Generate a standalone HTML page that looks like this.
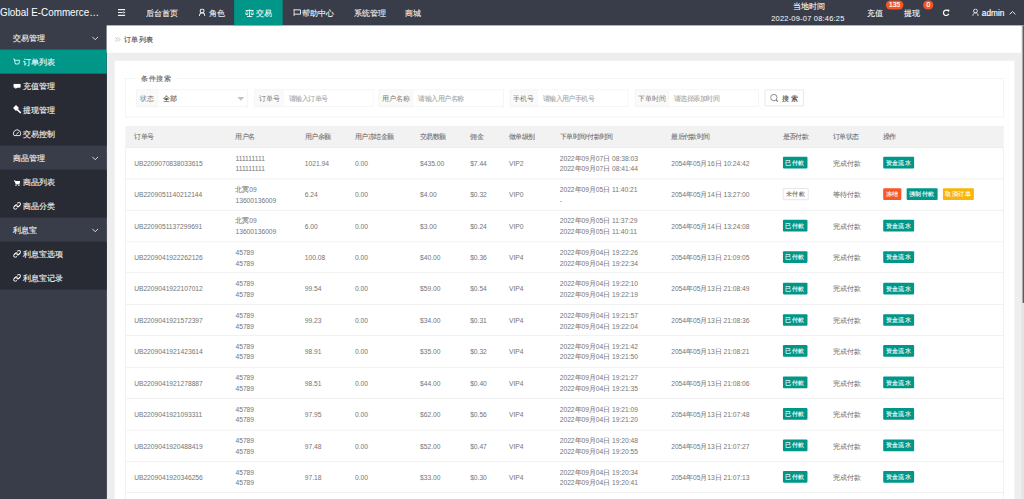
<!DOCTYPE html>
<html><head><meta charset="utf-8">
<style>
*{box-sizing:border-box;margin:0;padding:0}
html,body{width:1024px;height:499px;overflow:hidden;background:#eee}
body{font-family:"Liberation Sans",sans-serif}
#root{position:absolute;left:0;top:0;width:1920px;height:936px;transform:scale(0.533333);transform-origin:0 0;background:#eeeeee;overflow:hidden;font-family:"Liberation Sans",sans-serif}
#inner{position:absolute;left:0;top:0;width:1920px;height:936px}
.abs{position:absolute}
#hdr{left:0;top:0;width:1920px;height:48px;background:#393D49;color:#fff}
#logo{left:0;top:0;width:240px;height:48px;line-height:45.5px;font-size:21px;transform:scaleX(.88);transform-origin:0 0;color:#fff;white-space:nowrap;overflow:hidden}
.nav{position:absolute;top:0;height:48px;line-height:49px;font-size:15px;color:#f0f0f0;-webkit-text-stroke:.2px #f0f0f0;white-space:nowrap}
.nav.act{background:#009688;color:#fff}
.ico{position:absolute}
#side{left:0;top:48px;width:200px;height:888px;background:#393D49}
.si{position:absolute;left:0;width:200px;height:45px;line-height:47px;font-size:15px;color:#f0f0f0;-webkit-text-stroke:.25px #f0f0f0;white-space:nowrap}
.si.child{background:transparent}
.si.act{background:#009688;color:#fff}
#crumb{left:200px;top:48px;width:1715px;height:51px;background:#fff;box-shadow:0 1px 3px rgba(0,0,0,.12)}
#crumbtxt{left:232px;top:48px;height:51px;line-height:51px;font-size:14px;color:#555;-webkit-text-stroke:.3px #555;white-space:nowrap}
#scroll{left:1915px;top:48px;width:5px;height:888px;background:#e4e4e4}
#thumb{left:1916.5px;top:48px;width:3.5px;height:520px;background:linear-gradient(90deg,#8a8a8a,#454545)}
#card{left:215px;top:114px;width:1687px;height:900px;background:#fff}
#fs{left:235px;top:147px;width:1647px;height:73px;border:1px solid #ebebeb}
#legend{left:254px;top:136px;height:22px;line-height:22px;padding:0 11px;background:#fff;font-size:14px;color:#666;-webkit-text-stroke:.2px #666;white-space:nowrap}
.lab{position:absolute;top:168px;height:32px;line-height:33px;border:1px solid #eee;background:#fafafa;color:#777;font-size:12.5px;text-align:center;white-space:nowrap}
.inp{position:absolute;top:168px;height:32px;line-height:33px;border:1px solid #eee;border-left:none;background:#fff;color:#aaa;font-size:12.6px;letter-spacing:-.9px;color:#aaa;-webkit-text-stroke:.2px #aaa;padding-left:9.5px;white-space:nowrap}
#sbtn{left:1434px;top:168px;width:73px;height:31px;border:1px solid #d6d6d6;background:#fff;border-radius:1px;line-height:30px;font-size:13px;color:#555;white-space:nowrap}
#tbl{left:235px;top:236px;width:1647px}
table{border-left:1px solid #e6e6e6;border-right:1px solid #e6e6e6;border-collapse:collapse;table-layout:fixed;width:1647px;font-size:12.6px;color:#666;letter-spacing:-.05px}
.td{position:absolute;line-height:20px;white-space:nowrap;font-size:12.6px;color:#757575;letter-spacing:-.05px}
.c{-webkit-text-stroke:.1px #707070}
.th{position:absolute;line-height:20px;white-space:nowrap;font-size:12.2px;color:#707070;-webkit-text-stroke:.15px #707070}
td{height:58.85px}
th{height:41px}
.btn{display:inline-block;float:left;height:22px;line-height:22px;padding:0 5px;font-size:12px;color:#fff;-webkit-text-stroke:.2px #fff;background:#009688;border-radius:2px;letter-spacing:0;vertical-align:middle;white-space:nowrap}
.btn+.btn{margin-left:10px}
.btn.pri{background:#fff;color:#666;-webkit-text-stroke:.15px #666;border:1px solid #d2d2d2;line-height:20px}
.btn.dan{background:#F85824}
.btn.warm{background:#F9B60A}
.badge{position:absolute;height:17px;line-height:17px;border-radius:9px;background:#F4561F;color:#fff;font-size:12.5px;-webkit-text-stroke:.3px #fff;text-align:center}
</style></head>
<body>
<div id="root"><div id="inner">
<div class="abs" style="left:0;top:0;width:200px;height:936px;background:#393D49"></div>
<div id="hdr" class="abs">
<div id="logo" class="abs">Global E-Commerce…</div>
<svg class="ico" style="left:221px;top:17px" width="14" height="13" viewBox="0 0 14 13" fill="none" stroke="#f0f0f0"><path d="M0 1.2h14M0 6.5h9M0 11.8h14" stroke-width="2.2"/><path d="M10.5 4v5l3.5-2.5z" fill="#fff" stroke="none"/></svg>
<div class="nav" style="left:273px">后台首页</div>
<svg class="ico" style="left:373px;top:16px" width="12" height="14" viewBox="0 0 12 14" fill="none" stroke="#f0f0f0"><circle cx="6" cy="4.6" r="3.6" stroke-width="1.9"/><path d="M1 14c0-3.6 2.2-6 5-6s5 2.4 5 6" stroke-width="1.9"/></svg>
<div class="nav" style="left:391px">角色</div>
<div class="nav act" style="left:439px;width:91px"></div>
<svg class="ico" style="left:459px;top:17px" width="18" height="15" viewBox="0 0 18 15" fill="none" stroke="#fff"><path d="M9 0.5v13M4 14h10M1.5 2.8h15" stroke-width="1.7"/><path d="M0.6 8.2h6.2a3.1 2.8 0 0 1-6.2 0zM11.2 8.2h6.2a3.1 2.8 0 0 1-6.2 0z" fill="#fff" stroke="none"/><path d="M3.7 3l-2.6 5M3.7 3l2.6 5M14.3 3l-2.6 5M14.3 3l2.6 5" stroke-width="0.9"/></svg>
<div class="nav" style="left:480px;color:#fff">交易</div>
<svg class="ico" style="left:550px;top:17px" width="15" height="13" viewBox="0 0 15 13" fill="none" stroke="#f0f0f0"><path d="M1.2 0v13" stroke-width="2"/><path d="M1.2 1.5h12.3v8H1.2" stroke-width="1.8"/></svg>
<div class="nav" style="left:567px">帮助中心</div>
<div class="nav" style="left:663px">系统管理</div>
<div class="nav" style="left:759px">商城</div>
<div class="nav" style="left:1487px;top:-13px;color:#fff">当地时间</div>
<div class="nav" style="left:1446px;top:10px;color:#fff;font-size:14px;letter-spacing:.4px;-webkit-text-stroke:0">2022-09-07 08:46:25</div>
<div class="nav" style="left:1626px;top:0px;color:#fff;-webkit-text-stroke:.15px #fff">充值</div>
<div class="badge" style="left:1661px;top:1px;width:33px">135</div>
<div class="nav" style="left:1695px;top:0px;color:#fff;-webkit-text-stroke:.15px #fff">提现</div>
<div class="badge" style="left:1731px;top:1px;width:19px">0</div>
<svg class="ico" style="left:1767px;top:17px" width="14" height="14" viewBox="0 0 14 14" fill="none" stroke="#fff"><path d="M11.7 8.7A5 5 0 1 1 10.2 3.2" stroke-width="2.3"/><path d="M8.3 1.3l5-.3-.9 5.2z" fill="#fff" stroke="none"/></svg>
<svg class="ico" style="left:1823px;top:16px" width="13" height="14" viewBox="0 0 13 14" fill="none" stroke="#f0f0f0"><circle cx="6" cy="4.6" r="3.6" stroke-width="1.7"/><path d="M1 14c0-3.6 2.2-6 5-6s5 2.4 5 6" stroke-width="1.7"/></svg>
<div class="nav" style="left:1841px;color:#fff;font-size:15.5px;-webkit-text-stroke:.3px #fff">admin</div>
<svg class="ico" style="left:1892px;top:20px" width="13" height="8" viewBox="0 0 13 8" fill="none" stroke="#f0f0f0"><path d="M1 7l5.5-5.5L12 7" stroke-width="1.8"/></svg>
</div>
<div id="side" class="abs">
<div class="abs" style="left:0;top:90px;width:200px;height:135px;background:#282b33"></div>
<div class="abs" style="left:0;top:270px;width:200px;height:90px;background:#282b33"></div>
<div class="abs" style="left:0;top:405px;width:200px;height:90px;background:#282b33"></div>
<div class="si" style="top:0px;padding-left:23.5px">交易管理</div>
<svg class="ico" style="left:172px;top:20px" width="13" height="8" viewBox="0 0 13 8" fill="none" stroke="#e8e8e8"><path d="M1 1l5.5 5.5L12 1" stroke-width="1.7"/></svg>
<div class="si act" style="top:45px;padding-left:43px">订单列表</div>
<svg class="ico" style="left:24px;top:61px" width="14" height="14" viewBox="0 0 14 14" fill="none" stroke="#e0fff8"><path d="M0.6 1.2l2.2.3 2 9.5h6.4l1.8-7H4" stroke-width="1.7"/></svg>
<div class="si child" style="top:90px;padding-left:43px">充值管理</div>
<svg class="ico" style="left:25px;top:109px" width="14" height="10" viewBox="0 0 14 10" fill="none" stroke="currentColor"><path d="M2 0h10a2 2 0 0 1 2 2v3.5a2 2 0 0 1-2 2H7L4 10V7.5H2a2 2 0 0 1-2-2V2a2 2 0 0 1 2-2z" fill="#fff" stroke="none"/></svg>
<div class="si child" style="top:135px;padding-left:43px">提现管理</div>
<svg class="ico" style="left:24px;top:148px" width="16" height="17" viewBox="0 0 16 17" fill="none" stroke="currentColor"><path d="M0.5 6.5L6 1l5.5 5.5L6 12z" fill="#fff" stroke="none"/><path d="M8 9l6.5 6.5" stroke="#fff" stroke-width="3" stroke-linecap="round"/></svg>
<div class="si child" style="top:180px;padding-left:43px">交易控制</div>
<svg class="ico" style="left:24px;top:193px" width="16" height="16" viewBox="0 0 16 16" fill="none" stroke="currentColor"><path d="M2.3 13.2A6.9 6.9 0 1 1 13.7 13.2z" stroke="#fff" stroke-width="1.6"/><path d="M6.5 11.5l5-5.5" stroke="#fff" stroke-width="1.6"/></svg>
<div class="si" style="top:225px;padding-left:23.5px">商品管理</div>
<svg class="ico" style="left:172px;top:245px" width="13" height="8" viewBox="0 0 13 8" fill="none" stroke="#e8e8e8"><path d="M1 1l5.5 5.5L12 1" stroke-width="1.7"/></svg>
<div class="si child" style="top:270px;padding-left:43px">商品列表</div>
<svg class="ico" style="left:26px;top:289px" width="12" height="12" viewBox="0 0 12 12" fill="none" stroke="currentColor"><path d="M0 0.8h2.4l.5 1.7h9.1l-1.5 5.5H3.6z" fill="#fff" stroke="none"/><path d="M3 8.3h8" stroke="#fff" stroke-width="1.3"/><circle cx="4" cy="10.8" r="1.2" fill="#fff" stroke="none"/><circle cx="9.5" cy="10.8" r="1.2" fill="#fff" stroke="none"/></svg>
<div class="si child" style="top:315px;padding-left:43px">商品分类</div>
<svg class="ico" style="left:25px;top:331px" width="14" height="14" viewBox="0 0 14 14" fill="none" stroke="currentColor"><path d="M6.3 7.7a3 3 0 0 0 4.2 0l2.4-2.4a3 3 0 0 0-4.2-4.2L7.6 2.2M7.7 6.3a3 3 0 0 0-4.2 0L1.1 8.7a3 3 0 0 0 4.2 4.2l1.1-1.1" stroke="#fff" stroke-width="2.1"/></svg>
<div class="si" style="top:360px;padding-left:23.5px">利息宝</div>
<svg class="ico" style="left:172px;top:380px" width="13" height="8" viewBox="0 0 13 8" fill="none" stroke="#e8e8e8"><path d="M1 1l5.5 5.5L12 1" stroke-width="1.7"/></svg>
<div class="si child" style="top:405px;padding-left:43px">利息宝选项</div>
<svg class="ico" style="left:25px;top:421px" width="14" height="14" viewBox="0 0 14 14" fill="none" stroke="currentColor"><path d="M6.3 7.7a3 3 0 0 0 4.2 0l2.4-2.4a3 3 0 0 0-4.2-4.2L7.6 2.2M7.7 6.3a3 3 0 0 0-4.2 0L1.1 8.7a3 3 0 0 0 4.2 4.2l1.1-1.1" stroke="#fff" stroke-width="2.1"/></svg>
<div class="si child" style="top:450px;padding-left:43px">利息宝记录</div>
<svg class="ico" style="left:25px;top:466px" width="14" height="14" viewBox="0 0 14 14" fill="none" stroke="currentColor"><path d="M6.3 7.7a3 3 0 0 0 4.2 0l2.4-2.4a3 3 0 0 0-4.2-4.2L7.6 2.2M7.7 6.3a3 3 0 0 0-4.2 0L1.1 8.7a3 3 0 0 0 4.2 4.2l1.1-1.1" stroke="#fff" stroke-width="2.1"/></svg>
</div>
<div id="crumb" class="abs"></div>
<svg class="ico" style="left:215px;top:69px" width="12" height="10" viewBox="0 0 12 10" fill="none" stroke="currentColor"><path d="M1 1l4 4-4 4M6 1l4 4-4 4" stroke="#aaa" stroke-width="1.3"/></svg>
<div id="crumbtxt" class="abs">订单列表</div>
<div id="card" class="abs"></div>
<div id="fs" class="abs"></div>
<div id="legend" class="abs">条件搜索</div>
<div class="lab" style="left:255px;width:42px">状态</div>
<div class="inp" style="left:297px;width:168px;color:#333;font-size:13.5px;-webkit-text-stroke:.1px #333">全部</div>
<svg class="ico" style="left:445px;top:182px" width="13" height="7" viewBox="0 0 13 7" fill="none" stroke="currentColor"><path d="M0 0h13L6.5 7z" fill="#c2c2c2" stroke="none"/></svg>
<div class="lab" style="left:477px;width:55px">订单号</div>
<div class="inp" style="left:532px;width:168px">请输入订单号</div>
<div class="lab" style="left:710px;width:65px">用户名称</div>
<div class="inp" style="left:775px;width:170px">请输入用户名称</div>
<div class="lab" style="left:956px;width:52px">手机号</div>
<div class="inp" style="left:1008px;width:170px">请输入用户手机号</div>
<div class="lab" style="left:1191px;width:63px">下单时间</div>
<div class="inp" style="left:1254px;width:169px">请选择添加时间</div>
<div id="sbtn" class="abs"></div>
<svg class="ico" style="left:1444px;top:176px" width="16" height="16" viewBox="0 0 16 16" fill="none" stroke="currentColor"><circle cx="7" cy="7" r="6" stroke="#777" stroke-width="1.6"/><path d="M11.5 11.5l3 3" stroke="#777" stroke-width="2"/></svg>
<div class="abs" style="left:1467px;top:169px;line-height:32px;font-size:13px;color:#444;-webkit-text-stroke:.2px #444;letter-spacing:4px;white-space:nowrap">搜索</div>
<div class="abs" style="left:235px;top:236.25px;width:1647px;height:40.75px;background:#f2f2f2;border-bottom:1px solid #e6e6e6"></div><div class="th" style="left:251.5px;top:246.25px">订单号</div><div class="th" style="left:441.5px;top:246.25px">用户名</div><div class="th" style="left:571.5px;top:246.25px">用户余额</div><div class="th" style="left:665.5px;top:246.25px">用户冻结金额</div><div class="th" style="left:787.5px;top:246.25px">交易数额</div><div class="th" style="left:881.5px;top:246.25px">佣金</div><div class="th" style="left:954.5px;top:246.25px">做单级别</div><div class="th" style="left:1049.5px;top:246.25px">下单时间/付款时间</div><div class="th" style="left:1258.5px;top:246.25px">最后付款时间</div><div class="th" style="left:1467.5px;top:246.25px">是否付款</div><div class="th" style="left:1561.5px;top:246.25px">订单状态</div><div class="th" style="left:1655.5px;top:246.25px">操作</div><div class="abs" style="left:235px;top:277.0px;width:1px;height:706.3199999999999px;background:#e6e6e6"></div><div class="abs" style="left:1881px;top:277.0px;width:1px;height:706.3199999999999px;background:#e6e6e6"></div><div class="abs" style="left:235px;top:334.86px;width:1647px;height:1px;background:#e6e6e6"></div><div class="td" style="left:251.5px;top:297.0px">UB2209070838033615</div><div class="td" style="left:441.5px;top:287.2px">111111111<br>111111111</div><div class="td" style="left:571.5px;top:297.0px">1021.94</div><div class="td" style="left:665.5px;top:297.0px">0.00</div><div class="td" style="left:787.5px;top:297.0px">$435.00</div><div class="td" style="left:881.5px;top:297.0px">$7.44</div><div class="td" style="left:954.5px;top:297.0px">VIP2</div><div class="td" style="left:1049.5px;top:287.2px">2022<span class="c">年</span>09<span class="c">月</span>07<span class="c">日</span> 08:38:03<br>2022<span class="c">年</span>09<span class="c">月</span>07<span class="c">日</span> 08:41:44</div><div class="td" style="left:1258.5px;top:297.0px">2054<span class="c">年</span>05<span class="c">月</span>16<span class="c">日</span> 10:24:42</div><div class="abs" style="left:1467.5px;top:294.3px"><span class="btn">已付款</span></div><div class="td" style="left:1561.5px;top:297.0px"><span class="c">完成付款</span></div><div class="abs" style="left:1655.5px;top:294.3px;white-space:nowrap"><span class="btn">资金流水</span></div><div class="abs" style="left:235px;top:393.72px;width:1647px;height:1px;background:#e6e6e6"></div><div class="td" style="left:251.5px;top:355.86px">UB2209051140212144</div><div class="td" style="left:441.5px;top:346.06px"><span class="c">北冥</span>09<br>13600136009</div><div class="td" style="left:571.5px;top:355.86px">6.24</div><div class="td" style="left:665.5px;top:355.86px">0.00</div><div class="td" style="left:787.5px;top:355.86px">$4.00</div><div class="td" style="left:881.5px;top:355.86px">$0.32</div><div class="td" style="left:954.5px;top:355.86px">VIP0</div><div class="td" style="left:1049.5px;top:346.06px">2022<span class="c">年</span>09<span class="c">月</span>05<span class="c">日</span> 11:40:21<br>-</div><div class="td" style="left:1258.5px;top:355.86px">2054<span class="c">年</span>05<span class="c">月</span>14<span class="c">日</span> 13:27:00</div><div class="abs" style="left:1467.5px;top:353.16px"><span class="btn pri">未付款</span></div><div class="td" style="left:1561.5px;top:355.86px"><span class="c">等待付款</span></div><div class="abs" style="left:1655.5px;top:353.16px;white-space:nowrap"><span class="btn dan">冻结</span><span class="btn">强制付款</span><span class="btn warm">取消订单</span></div><div class="abs" style="left:235px;top:452.58000000000004px;width:1647px;height:1px;background:#e6e6e6"></div><div class="td" style="left:251.5px;top:414.72px">UB2209051137299691</div><div class="td" style="left:441.5px;top:404.92px"><span class="c">北冥</span>09<br>13600136009</div><div class="td" style="left:571.5px;top:414.72px">6.00</div><div class="td" style="left:665.5px;top:414.72px">0.00</div><div class="td" style="left:787.5px;top:414.72px">$3.00</div><div class="td" style="left:881.5px;top:414.72px">$0.24</div><div class="td" style="left:954.5px;top:414.72px">VIP0</div><div class="td" style="left:1049.5px;top:404.92px">2022<span class="c">年</span>09<span class="c">月</span>05<span class="c">日</span> 11:37:29<br>2022<span class="c">年</span>09<span class="c">月</span>05<span class="c">日</span> 11:40:11</div><div class="td" style="left:1258.5px;top:414.72px">2054<span class="c">年</span>05<span class="c">月</span>14<span class="c">日</span> 13:24:08</div><div class="abs" style="left:1467.5px;top:412.02000000000004px"><span class="btn">已付款</span></div><div class="td" style="left:1561.5px;top:414.72px"><span class="c">完成付款</span></div><div class="abs" style="left:1655.5px;top:412.02000000000004px;white-space:nowrap"><span class="btn">资金流水</span></div><div class="abs" style="left:235px;top:511.43999999999994px;width:1647px;height:1px;background:#e6e6e6"></div><div class="td" style="left:251.5px;top:473.58px">UB2209041922262126</div><div class="td" style="left:441.5px;top:463.78px">45789<br>45789</div><div class="td" style="left:571.5px;top:473.58px">100.08</div><div class="td" style="left:665.5px;top:473.58px">0.00</div><div class="td" style="left:787.5px;top:473.58px">$40.00</div><div class="td" style="left:881.5px;top:473.58px">$0.36</div><div class="td" style="left:954.5px;top:473.58px">VIP4</div><div class="td" style="left:1049.5px;top:463.78px">2022<span class="c">年</span>09<span class="c">月</span>04<span class="c">日</span> 19:22:26<br>2022<span class="c">年</span>09<span class="c">月</span>04<span class="c">日</span> 19:22:34</div><div class="td" style="left:1258.5px;top:473.58px">2054<span class="c">年</span>05<span class="c">月</span>13<span class="c">日</span> 21:09:05</div><div class="abs" style="left:1467.5px;top:470.88px"><span class="btn">已付款</span></div><div class="td" style="left:1561.5px;top:473.58px"><span class="c">完成付款</span></div><div class="abs" style="left:1655.5px;top:470.88px;white-space:nowrap"><span class="btn">资金流水</span></div><div class="abs" style="left:235px;top:570.3000000000001px;width:1647px;height:1px;background:#e6e6e6"></div><div class="td" style="left:251.5px;top:532.44px">UB2209041922107012</div><div class="td" style="left:441.5px;top:522.6400000000001px">45789<br>45789</div><div class="td" style="left:571.5px;top:532.44px">99.54</div><div class="td" style="left:665.5px;top:532.44px">0.00</div><div class="td" style="left:787.5px;top:532.44px">$59.00</div><div class="td" style="left:881.5px;top:532.44px">$0.54</div><div class="td" style="left:954.5px;top:532.44px">VIP4</div><div class="td" style="left:1049.5px;top:522.6400000000001px">2022<span class="c">年</span>09<span class="c">月</span>04<span class="c">日</span> 19:22:10<br>2022<span class="c">年</span>09<span class="c">月</span>04<span class="c">日</span> 19:22:19</div><div class="td" style="left:1258.5px;top:532.44px">2054<span class="c">年</span>05<span class="c">月</span>13<span class="c">日</span> 21:08:49</div><div class="abs" style="left:1467.5px;top:529.74px"><span class="btn">已付款</span></div><div class="td" style="left:1561.5px;top:532.44px"><span class="c">完成付款</span></div><div class="abs" style="left:1655.5px;top:529.74px;white-space:nowrap"><span class="btn">资金流水</span></div><div class="abs" style="left:235px;top:629.16px;width:1647px;height:1px;background:#e6e6e6"></div><div class="td" style="left:251.5px;top:591.3px">UB2209041921572397</div><div class="td" style="left:441.5px;top:581.5px">45789<br>45789</div><div class="td" style="left:571.5px;top:591.3px">99.23</div><div class="td" style="left:665.5px;top:591.3px">0.00</div><div class="td" style="left:787.5px;top:591.3px">$34.00</div><div class="td" style="left:881.5px;top:591.3px">$0.31</div><div class="td" style="left:954.5px;top:591.3px">VIP4</div><div class="td" style="left:1049.5px;top:581.5px">2022<span class="c">年</span>09<span class="c">月</span>04<span class="c">日</span> 19:21:57<br>2022<span class="c">年</span>09<span class="c">月</span>04<span class="c">日</span> 19:22:04</div><div class="td" style="left:1258.5px;top:591.3px">2054<span class="c">年</span>05<span class="c">月</span>13<span class="c">日</span> 21:08:36</div><div class="abs" style="left:1467.5px;top:588.5999999999999px"><span class="btn">已付款</span></div><div class="td" style="left:1561.5px;top:591.3px"><span class="c">完成付款</span></div><div class="abs" style="left:1655.5px;top:588.5999999999999px;white-space:nowrap"><span class="btn">资金流水</span></div><div class="abs" style="left:235px;top:688.02px;width:1647px;height:1px;background:#e6e6e6"></div><div class="td" style="left:251.5px;top:650.16px">UB2209041921423614</div><div class="td" style="left:441.5px;top:640.36px">45789<br>45789</div><div class="td" style="left:571.5px;top:650.16px">98.91</div><div class="td" style="left:665.5px;top:650.16px">0.00</div><div class="td" style="left:787.5px;top:650.16px">$35.00</div><div class="td" style="left:881.5px;top:650.16px">$0.32</div><div class="td" style="left:954.5px;top:650.16px">VIP4</div><div class="td" style="left:1049.5px;top:640.36px">2022<span class="c">年</span>09<span class="c">月</span>04<span class="c">日</span> 19:21:42<br>2022<span class="c">年</span>09<span class="c">月</span>04<span class="c">日</span> 19:21:50</div><div class="td" style="left:1258.5px;top:650.16px">2054<span class="c">年</span>05<span class="c">月</span>13<span class="c">日</span> 21:08:21</div><div class="abs" style="left:1467.5px;top:647.4599999999999px"><span class="btn">已付款</span></div><div class="td" style="left:1561.5px;top:650.16px"><span class="c">完成付款</span></div><div class="abs" style="left:1655.5px;top:647.4599999999999px;white-space:nowrap"><span class="btn">资金流水</span></div><div class="abs" style="left:235px;top:746.88px;width:1647px;height:1px;background:#e6e6e6"></div><div class="td" style="left:251.5px;top:709.02px">UB2209041921278887</div><div class="td" style="left:441.5px;top:699.22px">45789<br>45789</div><div class="td" style="left:571.5px;top:709.02px">98.51</div><div class="td" style="left:665.5px;top:709.02px">0.00</div><div class="td" style="left:787.5px;top:709.02px">$44.00</div><div class="td" style="left:881.5px;top:709.02px">$0.40</div><div class="td" style="left:954.5px;top:709.02px">VIP4</div><div class="td" style="left:1049.5px;top:699.22px">2022<span class="c">年</span>09<span class="c">月</span>04<span class="c">日</span> 19:21:27<br>2022<span class="c">年</span>09<span class="c">月</span>04<span class="c">日</span> 19:21:35</div><div class="td" style="left:1258.5px;top:709.02px">2054<span class="c">年</span>05<span class="c">月</span>13<span class="c">日</span> 21:08:06</div><div class="abs" style="left:1467.5px;top:706.3199999999999px"><span class="btn">已付款</span></div><div class="td" style="left:1561.5px;top:709.02px"><span class="c">完成付款</span></div><div class="abs" style="left:1655.5px;top:706.3199999999999px;white-space:nowrap"><span class="btn">资金流水</span></div><div class="abs" style="left:235px;top:805.74px;width:1647px;height:1px;background:#e6e6e6"></div><div class="td" style="left:251.5px;top:767.88px">UB2209041921093311</div><div class="td" style="left:441.5px;top:758.08px">45789<br>45789</div><div class="td" style="left:571.5px;top:767.88px">97.95</div><div class="td" style="left:665.5px;top:767.88px">0.00</div><div class="td" style="left:787.5px;top:767.88px">$62.00</div><div class="td" style="left:881.5px;top:767.88px">$0.56</div><div class="td" style="left:954.5px;top:767.88px">VIP4</div><div class="td" style="left:1049.5px;top:758.08px">2022<span class="c">年</span>09<span class="c">月</span>04<span class="c">日</span> 19:21:09<br>2022<span class="c">年</span>09<span class="c">月</span>04<span class="c">日</span> 19:21:20</div><div class="td" style="left:1258.5px;top:767.88px">2054<span class="c">年</span>05<span class="c">月</span>13<span class="c">日</span> 21:07:48</div><div class="abs" style="left:1467.5px;top:765.18px"><span class="btn">已付款</span></div><div class="td" style="left:1561.5px;top:767.88px"><span class="c">完成付款</span></div><div class="abs" style="left:1655.5px;top:765.18px;white-space:nowrap"><span class="btn">资金流水</span></div><div class="abs" style="left:235px;top:864.6px;width:1647px;height:1px;background:#e6e6e6"></div><div class="td" style="left:251.5px;top:826.74px">UB2209041920488419</div><div class="td" style="left:441.5px;top:816.94px">45789<br>45789</div><div class="td" style="left:571.5px;top:826.74px">97.48</div><div class="td" style="left:665.5px;top:826.74px">0.00</div><div class="td" style="left:787.5px;top:826.74px">$52.00</div><div class="td" style="left:881.5px;top:826.74px">$0.47</div><div class="td" style="left:954.5px;top:826.74px">VIP4</div><div class="td" style="left:1049.5px;top:816.94px">2022<span class="c">年</span>09<span class="c">月</span>04<span class="c">日</span> 19:20:48<br>2022<span class="c">年</span>09<span class="c">月</span>04<span class="c">日</span> 19:20:55</div><div class="td" style="left:1258.5px;top:826.74px">2054<span class="c">年</span>05<span class="c">月</span>13<span class="c">日</span> 21:07:27</div><div class="abs" style="left:1467.5px;top:824.04px"><span class="btn">已付款</span></div><div class="td" style="left:1561.5px;top:826.74px"><span class="c">完成付款</span></div><div class="abs" style="left:1655.5px;top:824.04px;white-space:nowrap"><span class="btn">资金流水</span></div><div class="abs" style="left:235px;top:923.46px;width:1647px;height:1px;background:#e6e6e6"></div><div class="td" style="left:251.5px;top:885.6px">UB2209041920346256</div><div class="td" style="left:441.5px;top:875.8000000000001px">45789<br>45789</div><div class="td" style="left:571.5px;top:885.6px">97.18</div><div class="td" style="left:665.5px;top:885.6px">0.00</div><div class="td" style="left:787.5px;top:885.6px">$33.00</div><div class="td" style="left:881.5px;top:885.6px">$0.30</div><div class="td" style="left:954.5px;top:885.6px">VIP4</div><div class="td" style="left:1049.5px;top:875.8000000000001px">2022<span class="c">年</span>09<span class="c">月</span>04<span class="c">日</span> 19:20:34<br>2022<span class="c">年</span>09<span class="c">月</span>04<span class="c">日</span> 19:20:41</div><div class="td" style="left:1258.5px;top:885.6px">2054<span class="c">年</span>05<span class="c">月</span>13<span class="c">日</span> 21:07:13</div><div class="abs" style="left:1467.5px;top:882.9px"><span class="btn">已付款</span></div><div class="td" style="left:1561.5px;top:885.6px"><span class="c">完成付款</span></div><div class="abs" style="left:1655.5px;top:882.9px;white-space:nowrap"><span class="btn">资金流水</span></div><div class="abs" style="left:235px;top:982.32px;width:1647px;height:1px;background:#e6e6e6"></div><div class="td" style="left:251.5px;top:944.46px">UB2209041920187321</div><div class="td" style="left:441.5px;top:934.6600000000001px">45789<br>45789</div><div class="td" style="left:571.5px;top:944.46px">96.90</div><div class="td" style="left:665.5px;top:944.46px">0.00</div><div class="td" style="left:787.5px;top:944.46px">$28.00</div><div class="td" style="left:881.5px;top:944.46px">$0.25</div><div class="td" style="left:954.5px;top:944.46px">VIP4</div><div class="td" style="left:1049.5px;top:934.6600000000001px">2022<span class="c">年</span>09<span class="c">月</span>04<span class="c">日</span> 19:20:18<br>2022<span class="c">年</span>09<span class="c">月</span>04<span class="c">日</span> 19:20:26</div><div class="td" style="left:1258.5px;top:944.46px">2054<span class="c">年</span>05<span class="c">月</span>13<span class="c">日</span> 21:06:58</div><div class="abs" style="left:1467.5px;top:941.76px"><span class="btn">已付款</span></div><div class="td" style="left:1561.5px;top:944.46px"><span class="c">完成付款</span></div><div class="abs" style="left:1655.5px;top:941.76px;white-space:nowrap"><span class="btn">资金流水</span></div>
<div id="scroll" class="abs"></div>
<div id="thumb" class="abs"></div>
</div></div>
</body></html>
